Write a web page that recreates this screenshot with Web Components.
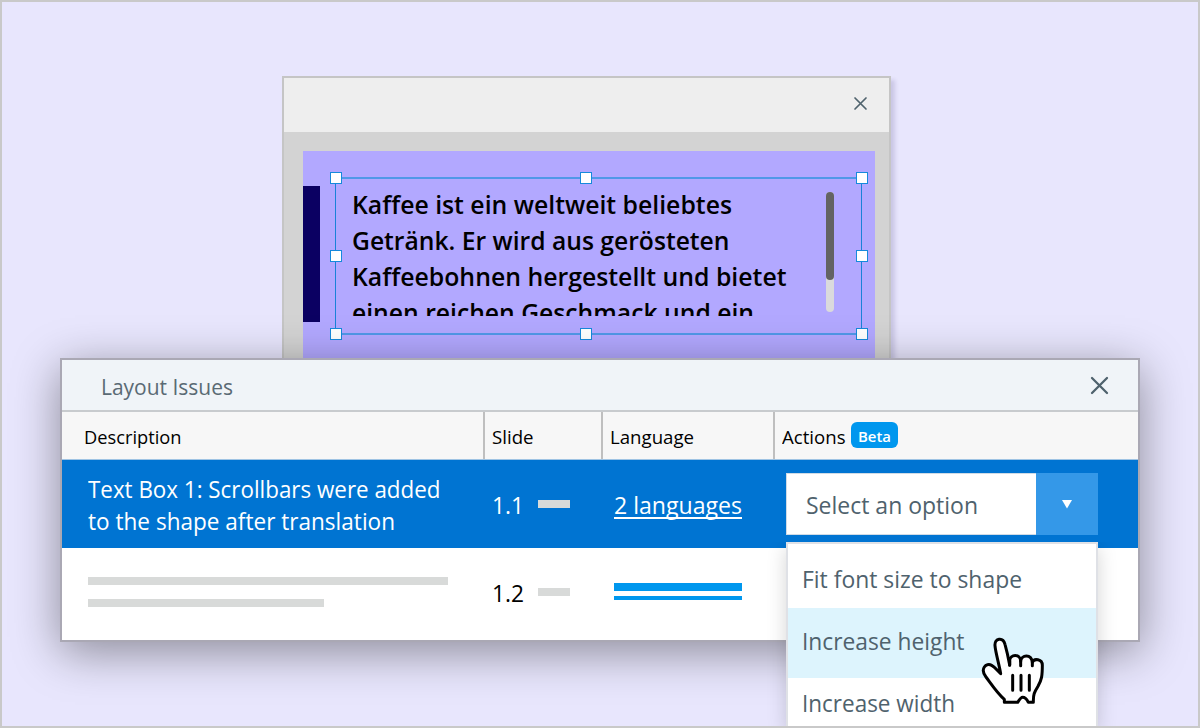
<!DOCTYPE html>
<html lang="en">
<head>
<meta charset="utf-8">
<title>Layout Issues</title>
<style>
html,body{margin:0;padding:0}
body{width:1200px;height:728px;overflow:hidden;font-family:"Open Sans","Noto Sans",sans-serif;color:#000}
</style>
</head>
<body>
<app-stage></app-stage>
<script>
const define=(name,html,setup)=>customElements.define(name,class extends HTMLElement{
  constructor(){super();this.attachShadow({mode:'open'}).innerHTML=html;}
  connectedCallback(){if(setup)setup(this,this.shadowRoot);}
});

/* A single line of text set to a given measure. */
define('text-run',`<style>
:host{display:block;white-space:nowrap;flex:none}
span{display:inline-block;transform-origin:0 50%}
</style><span><slot></slot></span>`,(el,root)=>{
  const s=root.querySelector('span'),w=+el.getAttribute('w');
  s.style.transform='none';el.style.width='max-content';
  const n=s.getBoundingClientRect().width;
  el.style.width=w+'px';
  s.style.transform='scaleX('+w/n+')';
});

define('close-icon',`<style>:host{display:block;line-height:0;color:#4f626d}svg{width:100%;height:100%;overflow:visible}</style>
<svg viewBox="0 0 14 14" fill="none" stroke="currentColor" stroke-linecap="round"><path d="M0 0 14 14M14 0 0 14" vector-effect="non-scaling-stroke" style="stroke-width:var(--s,2px)"/></svg>`);

define('skeleton-bar',`<style>:host{display:block;height:8px;background:#d8dad9;flex:none}</style>`);

define('selection-frame',`<style>
:host{display:block;box-sizing:border-box;border:1px solid #1a82d8;border-top:2px solid #5098e8;border-bottom:2px solid #5098e8}
i{position:absolute;box-sizing:border-box;width:12px;height:12px;margin:-6px;background:#fff;border:1px solid #1689dc}
.l{left:0}.c{left:249.5px}.r{left:525.5px}
.t{top:-1px}.m{top:77px}.b{top:155px}
</style><slot></slot>
<i class="l t"></i><i class="c t"></i><i class="r t"></i>
<i class="l m"></i><i class="r m"></i>
<i class="l b"></i><i class="c b"></i><i class="r b"></i>`);

define('scroll-thumb',`<style>
:host{display:block;width:8px;height:120px;border-radius:4px;background:#dadadc}
div{height:88px;border-radius:4px;background:#636363}</style><div></div>`);

define('slide-window',`<style>
:host{display:flex;flex-direction:column;box-sizing:border-box;border:2px solid #c5c5c5;background:#d3d3d3;box-shadow:4px 4px 4px rgba(60,50,110,.17)}
header{height:54px;background:#eee;display:flex;justify-content:flex-end;padding:20px 23px 0 0;box-sizing:border-box;flex:none}
close-icon{width:11px;height:11px;--s:1.7px}
.slide{margin:19px 14px 0 19px;flex:1;background:#b2a8ff;display:flex;align-items:flex-start}
.bar{width:17px;height:136px;margin-top:35px;background:#0b0062}
selection-frame{position:relative;width:527px;height:158px;margin:26px 0 0 15px;display:flex;align-items:flex-start}
.text{margin:7px 0 0 16px;width:473.5px;height:130px;overflow:hidden;font-size:26px;font-weight:600;line-height:36px}
scroll-thumb{margin-top:13px}
</style>
<header><close-icon></close-icon></header>
<div class="slide"><div class="bar"></div>
<selection-frame><div class="text">
<text-run w="380">Kaffee ist ein weltweit beliebtes</text-run>
<text-run w="377.5">Getränk. Er wird aus gerösteten</text-run>
<text-run w="434.5">Kaffeebohnen hergestellt und bietet</text-run>
<text-run w="402">einen reichen Geschmack und ein</text-run>
</div><scroll-thumb></scroll-thumb></selection-frame></div>`);

define('beta-badge',`<style>
:host{display:flex;justify-content:center;width:47px;height:26px;border-radius:6px;background:#0097ee;color:#fff;font-size:15px;font-weight:600;line-height:28px}</style>
<text-run w="33"><slot></slot></text-run>`);

define('option-select',`<style>
:host{display:flex;box-sizing:border-box;width:312px;height:62px;background:#fff;color:#4f626d;font-size:23px;line-height:62px}
.v{flex:1;box-sizing:border-box;border:1px solid #cfdbe6;border-width:1px 0 1px 1px;padding-left:18.5px;line-height:63px}
.b{width:62px;background:#3498e8;display:flex;justify-content:center}
svg{width:10px;height:9px;margin-top:27px}
</style><div class="v"><text-run w="172"> <slot></slot></text-run></div><div class="b"><svg viewBox="0 0 10 9"><path d="M0 0h10L5 8.5z" fill="#fff"/></svg></div>`);

define('issues-panel',`<style>
:host{display:block;box-sizing:border-box;border:2px solid #aaa8b4;background:#fff;box-shadow:0 10px 44px rgba(0,0,0,.4)}
header{height:50px;background:#f0f4f8;display:flex;justify-content:space-between;box-sizing:border-box;padding:0 31px 0 38.5px;color:#5a6a74;font-size:22.5px;line-height:53px}
close-icon{width:15px;height:15px;margin-top:17.5px;--s:2.3px}
.row{display:grid;grid-template-columns:421px 118px 172px 365px}
.head{height:50px;grid-template-rows:47px;box-sizing:border-box;border-top:2px solid #c8cbce;background:#f7f7f7;font-size:18.6px;line-height:50px;border-bottom:1px solid #9fc4e4}
.head>div+div{border-left:2px solid #bfbfbf;padding-left:7px}
.head .act{display:flex;gap:5px}
beta-badge{margin-top:10px}
.sel{height:88px;background:#0074d2;color:#fff;font-size:23px}
.desc{padding:13px 0 0 25.5px;line-height:32px}
.slide{display:flex;padding-left:9px;gap:14px}
.sel .slide{line-height:90px}.sel skeleton-bar{margin-top:40px}
.lang{padding-left:13px;line-height:90px;text-decoration:underline;text-decoration-thickness:1.5px;text-underline-offset:3px;text-decoration-skip-ink:none}
.pick{padding:13px 0 0 13px}
.next{height:92px;font-size:23px}
.bars{padding:28.5px 0 0 26px;display:flex;flex-direction:column;gap:14px}
.next .slide{line-height:91px}.next .slide skeleton-bar{margin-top:40px}
.links{padding:35px 0 0 13px;display:flex;flex-direction:column;gap:5px}
.links skeleton-bar{background:#0097ee;width:128px}
</style>
<header><text-run w="132">Layout Issues</text-run><close-icon></close-icon></header>
<div class="row head"><div style="padding-left:22px"><text-run w="97.5">Description</text-run></div><div><text-run w="41.5">Slide</text-run></div><div><text-run w="84">Language</text-run></div><div class="act"><text-run w="63.5">Actions</text-run><beta-badge>Beta</beta-badge></div></div>
<div class="row sel"><div class="desc"><text-run w="352.5">Text Box 1: Scrollbars were added</text-run><text-run w="307">to the shape after translation</text-run></div>
<div class="slide"><text-run w="32">1.1</text-run><skeleton-bar style="width:32px"></skeleton-bar></div>
<div class="lang"><text-run w="128"><u>2 languages</u></text-run></div>
<div class="pick"><option-select>Select an option</option-select></div></div>
<div class="row next"><div class="bars"><skeleton-bar style="width:360px"></skeleton-bar><skeleton-bar style="width:236px"></skeleton-bar></div>
<div class="slide"><text-run w="32">1.2</text-run><skeleton-bar style="width:32px"></skeleton-bar></div>
<div class="links"><skeleton-bar></skeleton-bar><skeleton-bar style="height:4px"></skeleton-bar></div><div></div></div>`);

define('option-menu',`<style>
:host{display:flex;flex-direction:column;box-sizing:border-box;border:2px solid #dfe1e6;border-bottom:0;background:#fff;color:#4f626d;font-size:23px;box-shadow:0 6px 18px rgba(0,0,0,.17);clip-path:inset(0 -30px 0 -30px)}
div{padding-left:13.5px;flex:none}
.a{height:64px;line-height:71px}.b{height:70px;line-height:67px;background:#ddf4fd}.c{height:48px;line-height:51px}
</style><div class="a"><text-run w="220">Fit font size to shape</text-run></div><div class="b"><text-run w="162.5">Increase height</text-run></div><div class="c"><text-run w="153">Increase width</text-run></div>`);

define('hand-cursor',`<style>:host{display:block;width:90px;height:90px}svg{display:block}</style>
<svg width="90" height="90" viewBox="0 0 270 270" fill="#fff" stroke="#000" stroke-width="9" stroke-linejoin="round" stroke-linecap="round">
<path d="M92 131C89 110 76 65 75 47C73 24 99 20 105 43C111 64 115 83 119 105V92C120 72 151 70 152 94C154 73 184 71 187 97C192 84 217 87 217 106C217 138 215 149 204 169C193 187 190 191 190 213V217H175C171 209 163 202 158 202C153 202 148 209 143 217H103V208C82 190 63 161 48 141C29 117 48 97 65 106C76 112 84 124 92 131Z"/>
<path d="M119 92V106M152 94V107M187 97V107M128 136V181M153 136V181M178 136V181" fill="none"/></svg>`);

define('app-stage',`<style>
:host{display:block;position:relative;overflow:hidden;width:1200px;height:728px;background:#e8e6fd}
slide-window{position:absolute;left:282px;top:76px;width:609px;height:300px}
issues-panel{position:absolute;left:60px;top:358px;width:1080px;height:284px}
option-menu{position:absolute;left:786px;top:542px;width:312px;height:184px}
hand-cursor{position:absolute;left:970px;top:630px}
.edge{position:absolute;inset:0;border:2px solid #c9c9c9;pointer-events:none}
</style><slide-window></slide-window><issues-panel></issues-panel><option-menu></option-menu><hand-cursor></hand-cursor><div class="edge"></div>`);
</script>
</body>
</html>
